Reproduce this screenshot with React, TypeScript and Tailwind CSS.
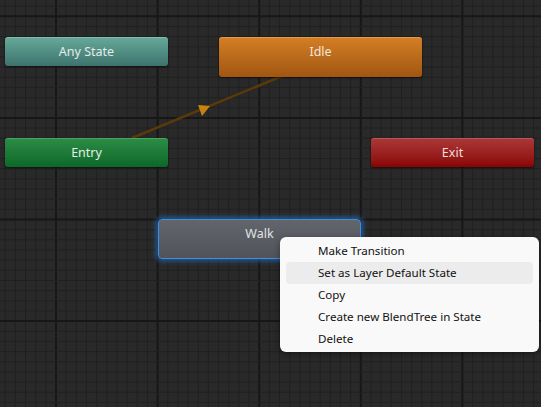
import React from "react";

const W = 541;
const H = 407;
const MAJOR = 101.6;
const MINOR = MAJOR / 10;
const OX = 56;
const OY = 16.3;

function Grid() {
  const lines: React.ReactNode[] = [];
  const startX = OX - MAJOR;
  for (let i = 0; ; i++) {
    const x = startX + i * MINOR;
    if (x > W) break;
    const major = i % 10 === 0;
    lines.push(
      <line key={"v" + i} x1={x} y1={0} x2={x} y2={H} stroke={major ? "#171717" : "#212121"} strokeWidth={major ? 2 : 1} />
    );
  }
  const startY = OY - MAJOR;
  for (let i = 0; ; i++) {
    const y = startY + i * MINOR;
    if (y > H) break;
    const major = i % 10 === 0;
    lines.push(
      <line key={"h" + i} x1={0} y1={y} x2={W} y2={y} stroke={major ? "#171717" : "#212121"} strokeWidth={major ? 2 : 1} />
    );
  }
  return (
    <svg className="absolute inset-0" width={W} height={H} viewBox={`0 0 ${W} ${H}`}>
      {lines}
      <line x1={132} y1={138} x2={282} y2={76} stroke="#5a3a08" strokeWidth={2.5} />
      <polygon points="198,105 210,106 202,116" fill="#c7830e" />
    </svg>
  );
}

const font = { fontFamily: '"Noto Sans", "Noto Sans CJK KR", sans-serif' };

export default function App() {
  return (
    <div className="relative w-[541px] h-[407px] overflow-hidden bg-[#292929]" style={font}>
      <Grid />

      <div className="absolute left-[5px] top-[37px] w-[163px] h-[29px] rounded-[3px] bg-gradient-to-b from-[#64a898] to-[#3e736d] border-t border-[#7fbcae] shadow-[0_1px_2px_rgba(0,0,0,0.6)] flex items-center justify-center text-[12.5px] text-[#e4ecea]">
        Any State
      </div>

      <div className="absolute left-[5px] top-[138px] w-[163px] h-[29px] rounded-[3px] bg-gradient-to-b from-[#2b8c45] to-[#0b6828] border-t border-[#4aa563] shadow-[0_1px_2px_rgba(0,0,0,0.6)] flex items-center justify-center text-[12.5px] text-[#e6eee8]">
        Entry
      </div>

      <div className="absolute left-[219px] top-[37px] w-[203px] h-[40px] rounded-[3px] bg-gradient-to-b from-[#d47e25] to-[#a05611] border-t border-[#e29a4a] shadow-[0_1px_2px_rgba(0,0,0,0.6)] flex justify-center pt-[5px] text-[12.5px] text-[#f1e6da]">
        Idle
      </div>

      <div className="absolute left-[371px] top-[138px] w-[163px] h-[29px] rounded-[3px] bg-gradient-to-b from-[#a93636] to-[#8a0202] border-t border-[#c05555] shadow-[0_1px_2px_rgba(0,0,0,0.6)] flex items-center justify-center text-[12.5px] text-[#f0dede]">
        Exit
      </div>

      <div className="absolute left-[158px] top-[219px] w-[203px] h-[40px] rounded-[4px] bg-gradient-to-b from-[#62656c] to-[#50535a] border border-[#3d8fe0] shadow-[0_0_5px_2px_rgba(40,130,230,0.6)] flex justify-center pt-[5px] text-[12.5px] text-[#e2e3e5]">
        Walk
      </div>

      <div className="absolute left-[280px] top-[237px] w-[259px] h-[115px] rounded-[6px] bg-[#f9f9f9] shadow-[0_2px_6px_rgba(0,0,0,0.4)] pt-[3px] px-[6px] text-[11.6px] text-[#111] flex flex-col">
        {["Make Transition", "Set as Layer Default State", "Copy", "Create new BlendTree in State", "Delete"].map((t, i) => (
          <div
            key={t}
            className={
              "h-[22px] flex items-center pl-[32px] rounded-[4px] " + (i === 1 ? "bg-[#ececec]" : "")
            }
          >
            {t}
          </div>
        ))}
      </div>
    </div>
  );
}
